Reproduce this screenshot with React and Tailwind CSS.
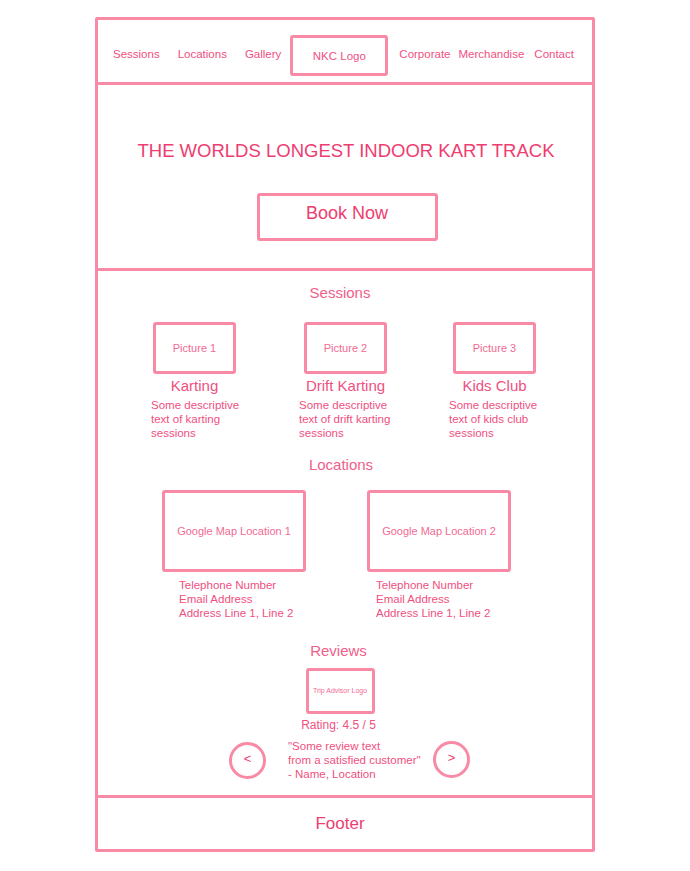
import React from 'react';

const navLeft = ['Sessions', 'Locations', 'Gallery'];
const navRight = ['Corporate', 'Merchandise', 'Contact'];

const sessions = [
  { pic: 'Picture 1', title: 'Karting', lines: ['Some descriptive', 'text of karting', 'sessions'], box: 'ml-[2px]', w: 'w-[148px]' },
  { pic: 'Picture 2', title: 'Drift Karting', lines: ['Some descriptive', 'text of drift karting', 'sessions'], box: 'ml-[5px]', w: 'w-[150px]' },
  { pic: 'Picture 3', title: 'Kids Club', lines: ['Some descriptive', 'text of kids club', 'sessions'], box: 'ml-[4px]', w: 'w-[120px]' },
];

const locations = [
  { label: 'Google Map Location 1', info: 'ml-[17px]', w: 'w-[205px]' },
  { label: 'Google Map Location 2', info: 'ml-[9px]', w: 'w-[150px]' },
];

export default function App() {
  return (
    <div className="min-h-screen bg-white pt-[17px] pl-[95px] font-['Liberation_Sans',Arial,sans-serif] text-[#ef4577]">
      <div className="w-[500px] border-[3px] border-[#f98aa6] rounded-[2px]">
        {/* Header / nav */}
        <header className="h-[65px] border-b-[3px] border-[#f98aa6] flex items-start pt-[15px] pl-[15px] text-[11.5px] text-[#f0507f]">
          <a className="mt-[11px]">{navLeft[0]}</a>
          <a className="mt-[11px] ml-[18px]">{navLeft[1]}</a>
          <a className="mt-[11px] ml-[18px]">{navLeft[2]}</a>
          <div className="ml-[9px] w-[98px] h-[41px] border-[3.5px] border-[#f98aa6] rounded-[3px] flex items-center justify-center pt-[2px]">
            NKC Logo
          </div>
          <a className="mt-[11px] ml-[11px]">{navRight[0]}</a>
          <a className="mt-[11px] ml-[8px]">{navRight[1]}</a>
          <a className="mt-[11px] ml-[10px]">{navRight[2]}</a>
        </header>

        {/* Hero */}
        <section className="h-[186px] border-b-[3px] border-[#f98aa6] flex flex-col items-center pt-[55px]">
          <h1 className="text-[18.5px] leading-[22px] text-[#ee3d70] pl-[2px]">THE WORLDS LONGEST INDOOR KART TRACK</h1>
          <button className="mt-[31px] ml-[4px] w-[181px] h-[48px] border-[3.5px] border-[#f98aa6] rounded-[3px] text-[18px] text-[#ee3d70] flex items-center justify-center pb-[8px]">
            Book Now
          </button>
        </section>

        {/* Content */}
        <main className="h-[527px] border-b-[3px] border-[#f98aa6] pt-[13px]">
          <h2 className="text-center pr-[10px] text-[15px] leading-[18px] text-[#f0608a]">Sessions</h2>
          <div className="flex pl-[53px] mt-[20px]">
            {sessions.map((s) => (
              <div key={s.pic} className={`${s.w} flex flex-col`}>
                <div className={`${s.box} w-[83px] h-[52px] border-[3.5px] border-[#f98aa6] rounded-[3px] flex items-center justify-center text-[11px] text-[#f26a93]`}>
                  {s.pic}
                </div>
                <div className={`${s.box} w-[83px] mt-[3px] text-center whitespace-nowrap text-[15px] leading-[18px] text-[#f0507f]`}>
                  {s.title}
                </div>
                <div className="mt-[3px] text-[11.5px] leading-[14px] text-[#f0507f] whitespace-nowrap">
                  {s.lines.map((l) => (
                    <div key={l}>{l}</div>
                  ))}
                </div>
              </div>
            ))}
          </div>

          <h2 className="mt-[16px] text-center pr-[8px] text-[15px] leading-[18px] text-[#f0608a]">Locations</h2>
          <div className="flex pl-[64px] mt-[16px]">
            {locations.map((l) => (
              <div key={l.label} className={`${l.w} flex flex-col`}>
                <div className="w-[144px] h-[82px] border-[3.5px] border-[#f98aa6] rounded-[3px] flex items-center justify-center text-[11px] text-[#f26a93]">
                  {l.label}
                </div>
                <div className={`${l.info} mt-[6px] text-[11.5px] leading-[14px] text-[#f0507f] whitespace-nowrap`}>
                  <div>Telephone Number</div>
                  <div>Email Address</div>
                  <div>Address Line 1, Line 2</div>
                </div>
              </div>
            ))}
          </div>

          <h2 className="mt-[22px] text-center pr-[13px] text-[15px] leading-[18px] text-[#f0608a]">Reviews</h2>
          <div className="flex flex-col items-center pr-[10px]">
            <div className="mt-[8px] w-[69px] h-[46px] border-[3.5px] border-[#f98aa6] rounded-[3px] flex items-center justify-center text-[7px] text-[#f26a93] whitespace-nowrap">
              Trip Advisor Logo
            </div>
            <div className="mt-[4px] text-[12px] leading-[14px] text-[#f0507f] pr-[3px]">Rating: 4.5 / 5</div>
          </div>
          <div className="flex items-center pl-[131px] mt-[7px]">
            <div className="w-[37px] h-[37px] rounded-full border-[3px] border-[#f98aa6] flex items-center justify-center text-[13px] text-[#ee3d70] pb-[2px]">
              &lt;
            </div>
            <div className="ml-[22px] w-[135px] text-[11.5px] leading-[14px] text-[#f0507f] whitespace-nowrap">
              <div>"Some review text</div>
              <div>from a satisfied customer"</div>
              <div>- Name, Location</div>
            </div>
            <div className="ml-[10px] -mt-[2px] w-[37px] h-[37px] rounded-full border-[3px] border-[#f98aa6] flex items-center justify-center text-[13px] text-[#ee3d70] pb-[2px]">
              &gt;
            </div>
          </div>
        </main>

        {/* Footer */}
        <footer className="h-[51px] flex items-center justify-center pr-[10px] text-[17px] text-[#ee3d70]">
          Footer
        </footer>
      </div>
    </div>
  );
}
